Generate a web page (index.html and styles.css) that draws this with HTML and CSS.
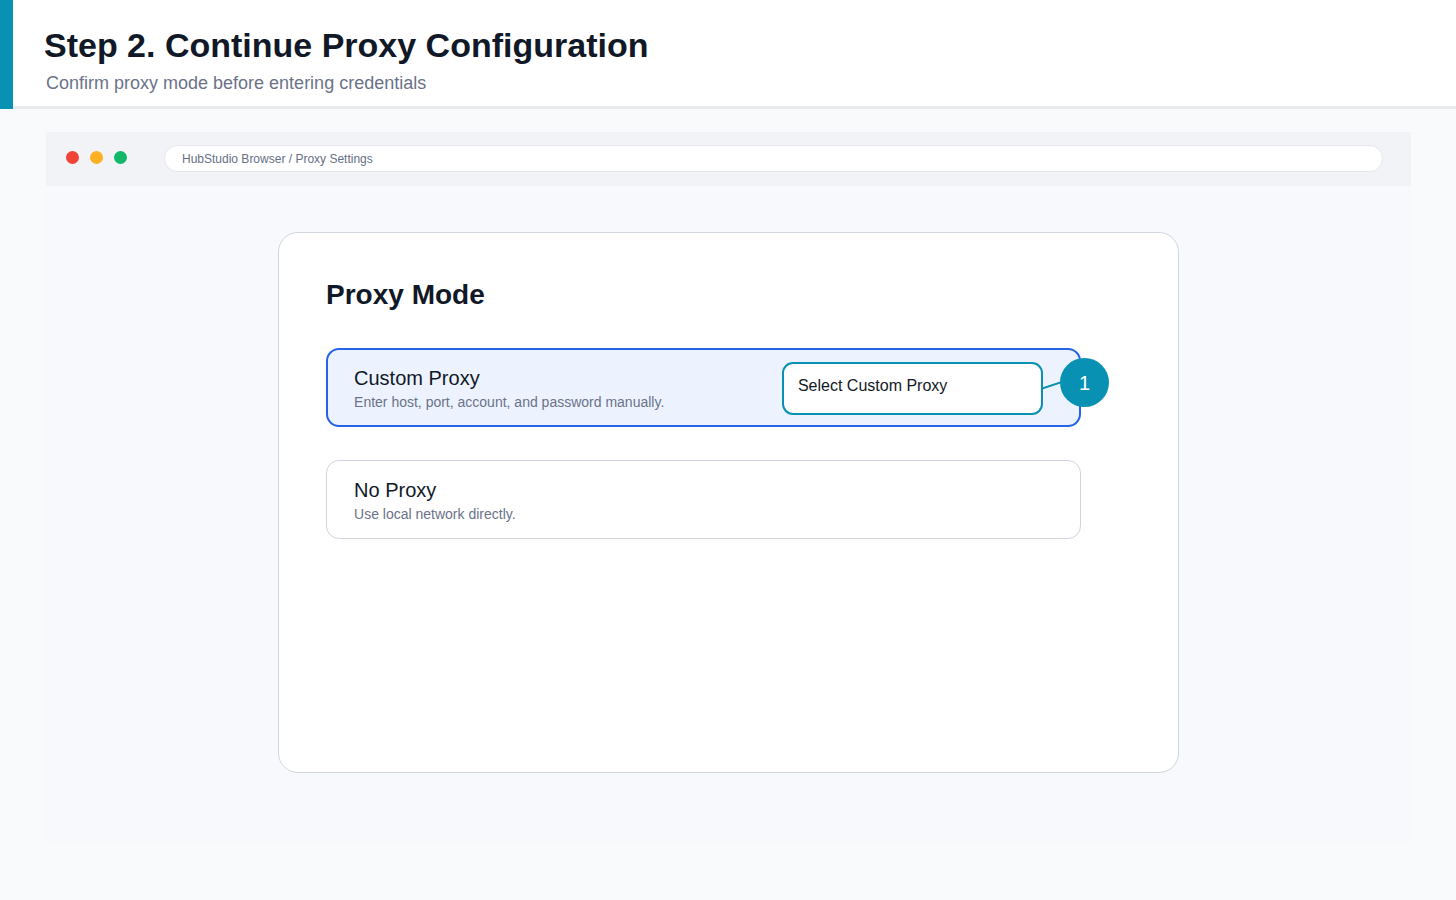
FILE: index.html
```html
<!DOCTYPE html>
<html lang="en">
<head>
<meta charset="utf-8">
<meta name="viewport" content="width=device-width, initial-scale=1">
<title>Step 2. Continue Proxy Configuration</title>
<link rel="stylesheet" href="styles.css">
</head>
<body>
<header class="step-header">
  <h1 class="step-title">Step 2. Continue Proxy Configuration</h1>
  <p class="step-subtitle">Confirm proxy mode before entering credentials</p>
</header>
<main class="stage">
  <section class="browser">
    <div class="browser-bar">
      <div class="lights">
        <span class="light light-red"></span>
        <span class="light light-amber"></span>
        <span class="light light-green"></span>
      </div>
      <input class="address" type="text" aria-label="Address" value="HubStudio Browser / Proxy Settings" readonly>
    </div>
    <div class="viewport">
      <form class="card">
        <h2 class="card-title" id="mode-title">Proxy Mode</h2>
        <div class="options" role="radiogroup" aria-labelledby="mode-title">
          <div class="option option-selected">
            <input class="option-radio" type="radio" name="mode" id="mode-custom" checked>
            <label class="option-label" for="mode-custom">
              <span class="option-name">Custom Proxy</span>
              <span class="option-text">Enter host, port, account, and password manually.</span>
            </label>
            <div class="callout">Select Custom Proxy</div>
            <svg class="connector" viewBox="0 0 20 10" aria-hidden="true"><path d="M0 7.500L20 1" fill="none" stroke="#0891b2" stroke-width="2"/></svg>
            <span class="badge">1</span>
          </div>
          <div class="option">
            <input class="option-radio" type="radio" name="mode" id="mode-none">
            <label class="option-label" for="mode-none">
              <span class="option-name">No Proxy</span>
              <span class="option-text">Use local network directly.</span>
            </label>
          </div>
        </div>
      </form>
    </div>
  </section>
</main>
</body>
</html>
```
FILE: styles.css
```css
* {
  box-sizing: border-box;
}

body {
  display: flex;
  flex-direction: column;
  min-height: 100vh;
  margin: 0;
  background: #f9fafc;
  color: #111827;
  font-family: "Liberation Sans", Arial, sans-serif;
}

h1,
h2,
p {
  margin: 0;
}

.step-header {
  padding: 24px 32px 14px 31px;
  border-left: 13px solid #0891b2;
  background: #fff;
  box-shadow: inset 0 -3px #e9eaee;
}

.step-title {
  font-size: 34px;
  line-height: 42px;
}

.step-subtitle {
  padding: 5px 2px 0;
  color: #6b7289;
  font-size: 18px;
  line-height: 24px;
}

.stage {
  display: flex;
  flex: 1;
  padding: 23px 45px 57px 46px;
}

.browser {
  display: flex;
  flex: 1;
  flex-direction: column;
  background: #f8f9fd;
}

.browser-bar {
  display: flex;
  align-items: center;
  gap: 37px;
  padding: 13px 28px 14px 20px;
  background: #f2f3f7;
}

.lights {
  display: flex;
  gap: 11px;
  padding-bottom: 2px;
}

.light {
  width: 13px;
  height: 13px;
  border-radius: 50%;
}

.light-red {
  background: #f04438;
}

.light-amber {
  background: #fdb022;
}

.light-green {
  background: #12b76a;
}

.address {
  flex: 1;
  min-width: 0;
  height: 27px;
  padding: 0 17px;
  border: 1px solid #e4e7ec;
  border-radius: 14px;
  background: #fff;
  color: #667085;
  font: 12px "Liberation Sans", Arial, sans-serif;
}

.viewport {
  display: flex;
  flex: 1;
  justify-content: center;
  padding: 46px 0 70px;
}

.card {
  width: 66%;
  padding: 45px 97px 47px 47px;
  border: 1px solid #d0d5dd;
  border-radius: 20px;
  background: #fff;
}

.card-title {
  font-size: 28px;
  line-height: 34px;
}

.options {
  display: grid;
  gap: 33px;
  margin-top: 36px;
}

.option {
  position: relative;
  border: 1px solid #d0d5dd;
  border-radius: 13px;
}

.option-selected {
  border: 2px solid #2563eb;
  background: #ecf3ff;
}

.option-radio {
  position: absolute;
  inset: 0;
  width: 100%;
  height: 100%;
  margin: 0;
  appearance: none;
  border-radius: 12px;
  cursor: pointer;
}

.option-label {
  display: block;
  padding: 17px 27px 12px;
}

.option-selected .option-label {
  padding: 16px 26px 11px;
}

.option-name,
.option-text {
  display: block;
}

.option-name {
  font-size: 20px;
  line-height: 24px;
}

.option-text {
  color: #6b7289;
  font-size: 14px;
  line-height: 24px;
}

.callout {
  position: absolute;
  top: 12px;
  right: 36px;
  width: 261px;
  height: 53px;
  padding: 12px 14px;
  border: 2px solid #0891b2;
  border-radius: 11px;
  background: #fff;
  font-size: 16px;
  line-height: 20px;
}

.connector {
  position: absolute;
  top: 31px;
  right: 17px;
  width: 20px;
  height: 10px;
}

.badge {
  position: absolute;
  top: 8px;
  right: -30px;
  width: 49px;
  height: 49px;
  border-radius: 50%;
  background: #0891b2;
  color: #fff;
  font-size: 20px;
  line-height: 51px;
  text-align: center;
}
```
